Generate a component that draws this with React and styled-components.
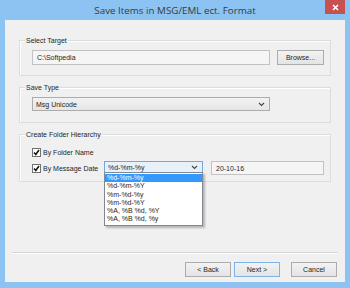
import styled, { createGlobalStyle } from 'styled-components';

const GlobalStyle = createGlobalStyle`
    html, body {
        margin: 0;
        padding: 0;
        background: #8cc3f2;
    }
    * {
        box-sizing: border-box;
    }
`;

const formats = ['%d-%m-%y', '%d-%m-%Y', '%m-%d-%y', '%m-%d-%Y', '%A, %B %d, %Y', '%A, %B %d, %y'];

const ChevronDown = () => (
    <svg width="7" height="5" viewBox="0 0 7 5">
        <path d="M1 1 L3.5 3.5 L6 1" fill="none" stroke="#444" strokeWidth="1.1" />
    </svg>
);

const CheckMark = () => (
    <svg width="7" height="7" viewBox="0 0 7 7">
        <path d="M1 3.5 L2.8 5.5 L6 1" fill="none" stroke="#111" strokeWidth="1.5" />
    </svg>
);

const CloseIcon = () => (
    <svg width="7" height="7" viewBox="0 0 7 7">
        <path d="M1 1 L6 6 M6 1 L1 6" stroke="#fff" strokeWidth="1.6" />
    </svg>
);

const App = () => {
    return (
        <>
            <GlobalStyle />
            <Window>
                <TitleBar>
                    <Title>Save Items in MSG/EML ect. Format</Title>
                    <CloseButton><CloseIcon /></CloseButton>
                </TitleBar>
                <Client>
                    <GroupBox $height={36}>
                        <Caption>Select Target</Caption>
                        <Row>
                            <TextField $width={238}>C:\Softpedia</TextField>
                            <Button $width={47}>Browse...</Button>
                        </Row>
                    </GroupBox>

                    <GroupBox $height={36}>
                        <Caption>Save Type</Caption>
                        <Row>
                            <Combo $width={238}>
                                <span>Msg Unicode</span>
                                <ChevronDown />
                            </Combo>
                        </Row>
                    </GroupBox>

                    <GroupBox $height={48} $top={12}>
                        <Caption>Create Folder Hierarchy</Caption>
                        <CheckRow>
                            <CheckBox><CheckMark /></CheckBox>
                            <CheckLabel>By Folder Name</CheckLabel>
                        </CheckRow>
                        <DateRow>
                            <CheckRow $width={72}>
                                <CheckBox><CheckMark /></CheckBox>
                                <CheckLabel>By Message Date</CheckLabel>
                            </CheckRow>
                            <DropWrap>
                                <Combo $width={99} $focused>
                                    <span>%d-%m-%y</span>
                                    <ChevronDown />
                                </Combo>
                                <DropList>
                                    {formats.map((f, i) => (
                                        <DropItem key={f} $selected={i === 0}>{f}</DropItem>
                                    ))}
                                </DropList>
                            </DropWrap>
                            <TextField $width={113} $height={14}>20-10-16</TextField>
                        </DateRow>
                    </GroupBox>

                    <Footer>
                        <Separator />
                        <Buttons>
                            <Button $width={46}>&lt; Back</Button>
                            <Button $width={46} $default>Next &gt;</Button>
                            <Button $width={46} $gap={8}>Cancel</Button>
                        </Buttons>
                    </Footer>
                </Client>
            </Window>
        </>
    );
};

const Window = styled.div`
    width: 350px;
    height: 288px;
    display: flex;
    flex-direction: column;
    background: #8cc3f2;
    font-family: "Liberation Sans", Arial, sans-serif;
    font-size: 7px;
    color: #1e1e1e;
`;

const TitleBar = styled.div`
    position: relative;
    height: 20px;
    display: flex;
    align-items: center;
    justify-content: center;
`;

const Title = styled.div`
    font-family: "Open Sans", "Noto Sans", sans-serif;
    font-size: 9.8px;
    color: #3a3a3a;
    padding-top: 1px;
`;

const CloseButton = styled.div`
    position: absolute;
    top: 0;
    right: 5px;
    width: 20px;
    height: 14px;
    background: #c75050;
    display: flex;
    align-items: center;
    justify-content: center;
`;

const Client = styled.div`
    flex: 1;
    margin: 0 5px 6px 5px;
    background: #f0f0f0;
    display: flex;
    flex-direction: column;
    padding: 20px 14px 0 14px;
`;

const GroupBox = styled.div`
    position: relative;
    height: ${p => p.$height}px;
    margin-bottom: ${p => p.$top ?? 11}px;
    border: 1px solid #dcdcdc;
    box-shadow: inset 1px 1px 0 #fff;
    padding: 9px 6px 0 12px;
    display: flex;
    flex-direction: column;
`;

const Caption = styled.span`
    position: absolute;
    top: -5px;
    left: 5px;
    padding: 0 1px;
    background: #f0f0f0;
    line-height: 9px;
`;

const Row = styled.div`
    display: flex;
    align-items: center;
    gap: 7px;
`;

const TextField = styled.div`
    width: ${p => p.$width}px;
    height: ${p => p.$height ?? 15}px;
    border: 1px solid #c2c2c2;
    background: #f5f5f5;
    padding: 0 4px;
    display: flex;
    align-items: center;
`;

const Combo = styled.div`
    width: ${p => p.$width}px;
    height: ${p => (p.$focused ? 12 : 14)}px;
    border: 1px solid ${p => (p.$focused ? '#6fa8dc' : '#acacac')};
    background: ${p => (p.$focused ? '#e8f1fa' : 'linear-gradient(#f2f2f2, #e6e6e6)')};
    padding: 0 4px 0 3px;
    display: flex;
    align-items: center;
    justify-content: space-between;
`;

const Button = styled.div`
    width: ${p => p.$width}px;
    height: 15px;
    margin-left: ${p => p.$gap ?? 0}px;
    border: 1px solid ${p => (p.$default ? '#7eb4ea' : '#acacac')};
    background: linear-gradient(#f2f2f2, #e4e4e4);
    display: flex;
    align-items: center;
    justify-content: center;
`;

const CheckRow = styled.div`
    display: flex;
    align-items: center;
    gap: 2px;
    width: ${p => (p.$width ? `${p.$width}px` : 'auto')};
    height: 10px;
    margin-top: 3px;
`;

const CheckBox = styled.div`
    width: 9px;
    height: 9px;
    border: 1px solid #707070;
    background: #fff;
    display: flex;
    align-items: center;
    justify-content: center;
`;

const CheckLabel = styled.span`
    line-height: 9px;
`;

const DateRow = styled.div`
    display: flex;
    align-items: flex-start;
    gap: 8px;
    margin-top: 4px;

    & > ${CheckRow} {
        margin-top: 2px;
        gap: 2px;
    }
`;

const DropWrap = styled.div`
    position: relative;
    margin-left: -8px;
`;

const DropList = styled.div`
    position: absolute;
    top: 11px;
    left: 0;
    width: 100%;
    padding: 1px 0;
    background: #fff;
    border: 1px solid #828790;
    box-shadow: 2px 2px 2px rgba(0, 0, 0, 0.25);
    z-index: 2;
`;

const DropItem = styled.div`
    height: 8.3px;
    line-height: 8.3px;
    padding-left: 2px;
    background: ${p => (p.$selected ? '#3399ff' : 'transparent')};
    color: ${p => (p.$selected ? '#fff' : '#1e1e1e')};
`;

const Footer = styled.div`
    margin-top: auto;
    margin-left: -7px;
    margin-right: -7px;
    padding-bottom: 5px;
`;

const Separator = styled.div`
    height: 2px;
    border-top: 1px solid #d5d5d5;
    border-bottom: 1px solid #fff;
    margin-bottom: 8px;
`;

const Buttons = styled.div`
    display: flex;
    justify-content: flex-end;
    gap: 3px;
    padding-right: 1px;
`;

export default App;
